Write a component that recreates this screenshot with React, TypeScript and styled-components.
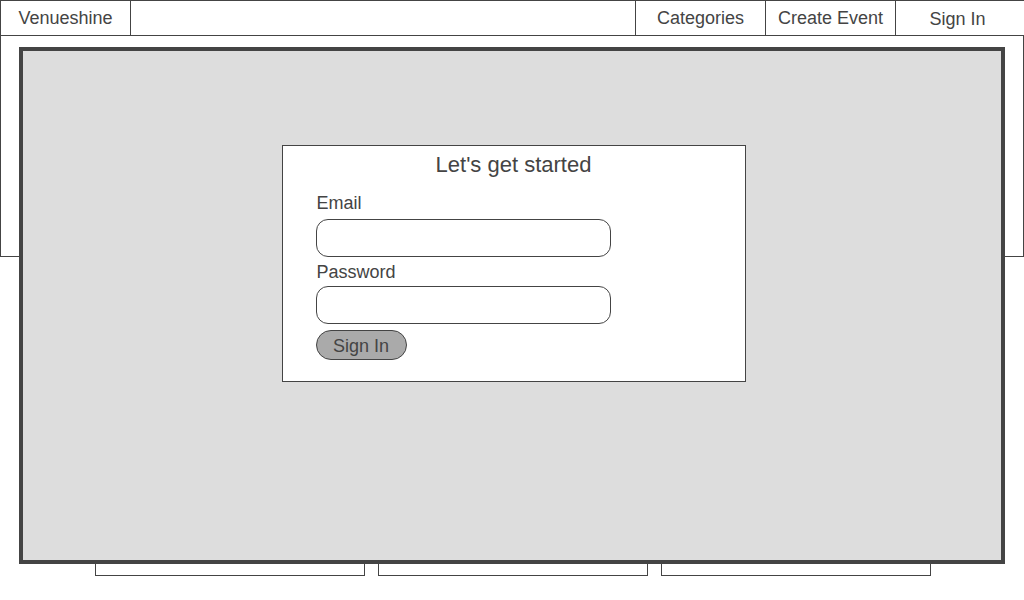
import React from "react";
import styled, { createGlobalStyle } from "styled-components";

const Global = createGlobalStyle`
  html, body {
    margin: 0;
    padding: 0;
    background: #ffffff;
    overflow: hidden;
  }
  body {
    font-family: "Liberation Sans", Arial, sans-serif;
    color: #444444;
    width: 1024px;
    height: 600px;
  }
  * { box-sizing: border-box; }
`;

const Page = styled.div`
  position: relative;
  width: 1024px;
  height: 600px;
  overflow: hidden;
`;

const NavBar = styled.nav`
  display: flex;
  height: 36px;
  width: 1030px;
  border-top: 1px solid #444;
  border-bottom: 1px solid #444;
  border-left: 1px solid #444;
`;

const NavCell = styled.div<{ $w: number; $dx?: number; $dy?: number }>`
  flex: 0 0 ${(p) => p.$w}px;
  width: ${(p) => p.$w}px;
  border-right: 1px solid #444;
  display: flex;
  align-items: center;
  justify-content: center;
  font-size: 18px;
  color: #444;
  padding-top: ${(p) => 1 + (p.$dy ?? 0)}px;
  padding-right: ${(p) => p.$dx ?? 0}px;
`;

const Hero = styled.section`
  height: 221px;
  width: 1024px;
  border: 1px solid #444;
  border-top: none;
`;

const CardRow = styled.div`
  display: flex;
  gap: 13px;
  padding-left: 95px;
  margin-top: 13px;
`;

const Card = styled.div`
  width: 270px;
  height: 306px;
  border: 1px solid #444;
`;

const Overlay = styled.div`
  position: absolute;
  left: 19px;
  top: 47px;
  width: 986px;
  height: 517px;
  border: 4px solid #444;
  background: #dddddd;
  display: flex;
  flex-direction: column;
  align-items: center;
  padding-top: 94px;
  padding-left: 3px;
`;

const Dialog = styled.form`
  width: 464px;
  height: 237px;
  background: #ffffff;
  border: 1px solid #444;
  display: flex;
  flex-direction: column;
  padding: 6px 33px 0 33px;
`;

const Title = styled.h2`
  margin: 0 0 16px 0;
  font-weight: normal;
  font-size: 22px;
  line-height: 25px;
  text-align: center;
  color: #444;
`;

const Label = styled.label<{ $mb?: number }>`
  font-size: 18px;
  line-height: 20px;
  padding-left: 1px;
  margin-bottom: ${(p) => p.$mb ?? 6}px;
  color: #444;
`;

const Field = styled.input<{ $mb?: number }>`
  width: 295px;
  height: 38px;
  border: 1px solid #444;
  border-radius: 12px;
  background: #fff;
  margin: 0 0 ${(p) => p.$mb ?? 5}px 0;
  padding: 0 10px;
  font: inherit;
  outline: none;
`;

const SubmitButton = styled.button`
  width: 91px;
  height: 30px;
  border: 1px solid #444;
  border-radius: 15px;
  background: #aaaaaa;
  color: #444;
  font-family: "Liberation Sans", Arial, sans-serif;
  font-size: 18px;
  padding: 2px 0 0 0;
  cursor: pointer;
`;

export default function App() {
  return (
    <>
      <Global />
      <Page>
        <NavBar>
          <NavCell $w={130}>Venueshine</NavCell>
          <NavCell $w={505} />
          <NavCell $w={130}>Categories</NavCell>
          <NavCell $w={130}>Create Event</NavCell>
          <NavCell $w={130} $dx={6} $dy={1}>Sign In</NavCell>
        </NavBar>
        <Hero />
        <CardRow>
          <Card />
          <Card />
          <Card />
        </CardRow>
        <Overlay>
          <Dialog onSubmit={(e) => e.preventDefault()}>
            <Title>Let's get started</Title>
            <Label htmlFor="email">Email</Label>
            <Field id="email" type="email" />
            <Label htmlFor="password" $mb={4}>Password</Label>
            <Field id="password" type="password" $mb={6} />
            <SubmitButton type="submit">Sign In</SubmitButton>
          </Dialog>
        </Overlay>
      </Page>
    </>
  );
}
